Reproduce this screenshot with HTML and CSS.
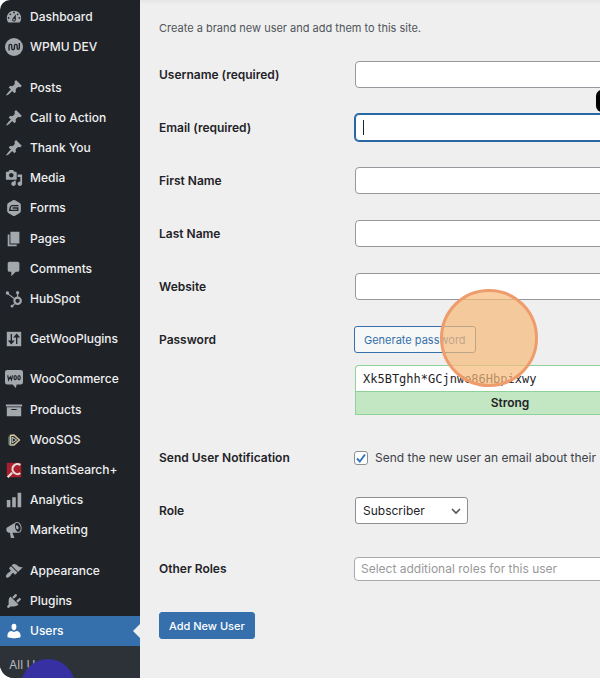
FILE: index.html
```html
<!DOCTYPE html>
<html lang="en">
<head>
<meta charset="utf-8">
<title>Add New User</title>
<link rel="stylesheet" href="styles.css">
</head>
<body>
<div class="shell">
  <nav class="sidebar" aria-label="Main menu">
    <ul class="menu">
      <li><a href="#"><svg viewBox="0 0 20 20"><path d="M3.76 16h12.48c1.1-1.37 1.76-3.11 1.76-5 0-4.42-3.58-8-8-8s-8 3.58-8 8c0 1.89.66 3.63 1.76 5zM10 4c.55 0 1 .45 1 1s-.45 1-1 1-1-.45-1-1 .45-1 1-1zM6 6c.55 0 1 .45 1 1s-.45 1-1 1-1-.45-1-1 .45-1 1-1zm8 0c.55 0 1 .45 1 1s-.45 1-1 1-1-.45-1-1 .45-1 1-1zm-5.37 5.55L12 7v6c0 1.1-.9 2-2 2s-2-.9-2-2c0-.57.24-1.08.63-1.45zM4 10c.55 0 1 .45 1 1s-.45 1-1 1-1-.45-1-1 .45-1 1-1zm12 0c.55 0 1 .45 1 1s-.45 1-1 1-1-.45-1-1 .45-1 1-1zm-5 3c0-.55-.45-1-1-1s-1 .45-1 1 .45 1 1 1 1-.45 1-1z"/></svg>Dashboard</a></li>
      <li><a href="#"><svg viewBox="0 0 20 20"><circle cx="10" cy="10" r="10"/><path class="cut-line" d="M4.5 14V8.5a1.5 1.5 0 0 1 3 0v3a1.5 1.5 0 0 0 3 0v-3a1.5 1.5 0 0 1 3 0v3a1.2 1.2 0 0 0 2.4 0V5.5"/></svg>WPMU DEV</a></li>
      <li class="separator"></li>
      <li><a href="#"><svg viewBox="0 0 20 20"><path id="pin" d="M10.44 3.02l1.82-1.82 6.36 6.35-1.83 1.82c-1.05-.68-2.48-.57-3.41.36l-.75.75c-.92.93-1.04 2.35-.35 3.41l-1.83 1.82-2.41-2.41-2.8 2.79c-.42.42-3.38 2.71-3.8 2.29s1.86-3.39 2.28-3.81l2.79-2.79L4.1 9.36l1.83-1.82c1.05.69 2.48.57 3.4-.36l.75-.75c.93-.92 1.05-2.35.36-3.41z"/></svg>Posts</a></li>
      <li><a href="#"><svg viewBox="0 0 20 20"><use href="#pin"/></svg>Call to Action</a></li>
      <li><a href="#"><svg viewBox="0 0 20 20"><use href="#pin"/></svg>Thank You</a></li>
      <li><a href="#"><svg viewBox="0 0 20 20"><path d="M13 11V4c0-.55-.45-1-1-1h-1.67L9 1H5L3.67 3H2c-.55 0-1 .45-1 1v7c0 .55.45 1 1 1h10c.55 0 1-.45 1-1zM7 4.5c1.38 0 2.5 1.12 2.5 2.5S8.38 9.5 7 9.5 4.5 8.38 4.5 7 5.62 4.5 7 4.5zM14 6h5v10.5c0 1.38-1.12 2.5-2.5 2.5S14 17.88 14 16.5s1.12-2.5 2.5-2.5c.17 0 .34.02.5.05V9h-3V6zm-4 8.05V13h2v3.5c0 1.38-1.12 2.5-2.5 2.5S7 17.88 7 16.5 8.12 14 9.5 14c.17 0 .34.02.5.05z"/></svg>Media</a></li>
      <li><a href="#"><svg viewBox="0 0 20 20"><path d="M8.8 1.5q1.2-.7 2.4 0l5.2 3q1.2.7 1.2 2.1v6.8q0 1.4-1.2 2.1l-5.2 3q-1.2.7-2.4 0l-5.2-3q-1.2-.7-1.2-2.1V6.600q0-1.400 1.200-2.100z"/><path class="cut-line" d="M15 7.300H8.200Q6.600 7.300 6 9l-.8 3.700h9V10H8.500"/></svg>Forms</a></li>
      <li><a href="#"><svg viewBox="0 0 20 20"><path d="M6 15V2h10v13H6zm-1 1h8v2H3V5h2v11z"/></svg>Pages</a></li>
      <li><a href="#"><svg viewBox="0 0 20 20"><path d="M5 2h9c1.100 0 2 .9 2 2v7c0 1.100-.9 2-2 2h-2l-5 5v-5H5c-1.100 0-2-.9-2-2V4c0-1.100.9-2 2-2z"/></svg>Comments</a></li>
      <li><a href="#"><svg viewBox="0 0 20 20"><circle class="line" cx="14" cy="12" r="3.600"/><path class="line thin" d="M14 8V4M11 10 3 4M11.500 14.500 8 18"/><circle cx="14" cy="3" r="1.800"/><circle cx="2.700" cy="3.400" r="1.900"/><circle cx="7.800" cy="18" r="1.500"/></svg>HubSpot</a></li>
      <li class="separator"></li>
      <li><a href="#"><svg viewBox="0 0 20 20"><path d="M2 2h16v16H2z"/><path class="cut-line" d="M7 4.500v9M4.800 12.500h4.400L7 15zM13 15.500v-9M10.800 7.500h4.400L13 5z"/></svg>GetWooPlugins</a></li>
      <li class="separator"></li>
      <li><a href="#"><svg viewBox="0 0 20 20"><path d="M2.500 0h15A2.500 2.500 0 0 1 20 2.500v11a2.500 2.500 0 0 1-2.500 2.500H13l-1 4-3.500-4h-6A2.500 2.500 0 0 1 0 13.500v-11A2.500 2.500 0 0 1 2.500 0z"/><path class="cut-line thin" d="M3 6l1 5 1.800-3.500 1.500 3.500 1-5"/><ellipse class="cut-line thin" cx="11.300" cy="8.500" rx="1.300" ry="2.200"/><ellipse class="cut-line thin" cx="15.600" cy="8.500" rx="1.300" ry="2.200"/></svg>WooCommerce</a></li>
      <li><a href="#"><svg viewBox="0 0 20 20"><path d="M19 4v2H1V4h18zM2 7h16v10H2V7zm11 3V9H7v1h6z"/></svg>Products</a></li>
      <li><a href="#"><svg viewBox="0 0 20 20"><path class="sos-ring" d="M6 15.500V5l4-.5 6 5.500-6 5.500z"/><path class="sos-edge" d="M4.500 6v8.500l4 1.500"/><path class="sos-core" d="m8 7 5 3-5 3z"/></svg>WooSOS</a></li>
      <li><a href="#"><svg viewBox="0 0 20 20"><path class="search-tile" d="M2 2h16v16H2z"/><path class="search-glass" d="M17 4.500a5.500 5.500 0 1 0 0 9M8 13l-5 5"/></svg>InstantSearch+</a></li>
      <li><a href="#"><svg viewBox="0 0 20 20"><path d="M18 18V2h-4v16h4zm-6 0V7H8v11h4zm-6 0v-8H2v8h4z"/></svg>Analytics</a></li>
      <li><a href="#"><svg viewBox="0 0 20 20"><path d="M18.150 5.940c.46 1.620.38 3.220-.02 4.480-.42 1.280-1.260 2.180-2.300 2.480-.16.06-.26.06-.4.06-.06.02-.12.02-.18.02-.06.02-.14.02-.22.02h-6.800l2.220 5.500c.02.14-.06.26-.14.34-.08.1-.24.16-.34.16H6.950c-.1 0-.26-.06-.34-.16-.08-.08-.16-.2-.14-.34l-1-5.500H4.250l-.02-.02c-.5.06-1.080-.18-1.540-.62s-.88-1.080-1.060-1.880c-.24-.8-.2-1.560-.02-2.200.18-.62.58-1.080 1.060-1.300l.02-.02 9-5.400c.1-.06.18-.1.24-.16.06-.04.14-.08.24-.12.16-.08.28-.12.5-.18 1.040-.3 2.240.1 3.220.98s1.840 2.240 2.260 3.860zm-2.580 5.980h-.02c.4-.1.74-.34 1.040-.7.58-.7.86-1.760.86-3.040 0-.64-.1-1.300-.28-1.980-.34-1.360-1.020-2.500-1.780-3.240s-1.680-1.100-2.460-.88c-.82.22-1.400.96-1.700 2-.32 1.040-.28 2.360.06 3.720.38 1.360 1 2.500 1.800 3.240.78.74 1.620 1.100 2.480.88zm-2.540-7.080c.22-.04.42-.02.62.04.38.16.76.48 1.020 1s.42 1.200.42 1.780c0 .3-.04.56-.12.8-.18.48-.44.84-.86.94-.34.1-.8-.06-1.140-.4s-.64-.86-.78-1.500c-.18-.62-.12-1.240.02-1.720s.48-.84.82-.94z"/></svg>Marketing</a></li>
      <li class="separator"></li>
      <li><a href="#"><svg viewBox="0 0 20 20"><path d="M14.480 11.060L7.410 3.990l1.500-1.500c.5-.56 2.300-.47 3.510.32 1.210.8 1.430 1.280 2.910 2.100 1.180.64 2.450 1.260 4.450.85zm-.71.71L6.700 4.700 4.930 6.470c-.39.39-.39 1.020 0 1.410l1.060 1.060c.39.39.39 1.030 0 1.420-.6.6-1.430 1.110-2.210 1.690-.35.26-.7.53-1.010.84C1.430 14.230.4 16.080 1.400 17.070c.99 1 2.840-.03 4.180-1.360.31-.31.58-.66.85-1.020.57-.78 1.080-1.610 1.690-2.210.39-.39 1.020-.39 1.410 0l1.060 1.060c.39.39 1.020.39 1.410 0z"/></svg>Appearance</a></li>
      <li><a href="#"><svg viewBox="0 0 20 20"><path d="M13.110 4.360L9.870 7.600 8 5.730l3.240-3.240c.35-.34 1.050-.2 1.560.32.52.51.66 1.210.31 1.550zm-8 1.770l.91-1.120 9.010 9.010-1.190.84c-.71.71-2.630 1.160-3.820 1.160H6.140L4.900 17.260c-.59.59-1.540.59-2.120 0-.59-.58-.59-1.530 0-2.120l1.240-1.240v-3.880c0-1.130.4-3.190 1.090-3.890zm7.260 3.970l3.240-3.240c.34-.35 1.040-.21 1.550.31.52.51.66 1.210.31 1.550l-3.240 3.250z"/></svg>Plugins</a></li>
      <li class="current"><a href="#" aria-current="page"><svg viewBox="0 0 20 20"><path d="M10 9.250c-2.270 0-2.730-3.440-2.730-3.440C7 4.020 7.820 2 9.970 2c2.160 0 2.980 2.020 2.710 3.810 0 0-.41 3.440-2.680 3.440zm0 1.750L12.720 10c2.390 0 4.520 2.330 4.520 4.530v2.490s-3.650 1.130-7.240 1.130c-3.650 0-7.240-1.130-7.240-1.130v-2.490c0-2.250 1.940-4.480 4.470-4.480z"/></svg>Users</a></li>
    </ul>
    <div class="submenu"><a href="#">All Users</a><span class="bubble"></span></div>
  </nav>

  <main class="content">
    <p class="intro">Create a brand new user and add them to this site.</p>
    <form class="user-form">
      <div class="row"><label for="username">Username (required)</label><input class="text" id="username" type="text"></div>
      <div class="row"><label for="email">Email (required)</label><div class="field"><input class="text active" id="email" type="text"><span class="caret"></span><span class="tooltip"></span></div></div>
      <div class="row"><label for="first">First Name</label><input class="text" id="first" type="text"></div>
      <div class="row"><label for="last">Last Name</label><input class="text" id="last" type="text"></div>
      <div class="row"><label for="website">Website</label><input class="text" id="website" type="text"></div>
      <div class="row"><label for="password">Password</label><div class="field"><button class="button" type="button">Generate password</button><span class="pointer"></span></div></div>
      <div class="row password-row"><div class="password"><input id="password" type="text" value="Xk5BTghh*GCjnwe86Hbpixwy"><div class="strength">Strong</div></div></div>
      <div class="row notify-row"><span class="heading">Send User Notification</span><label class="check" for="notify"><span class="box"><input id="notify" type="checkbox" checked><svg viewBox="0 0 14 14"><path d="M3 7.500 5.800 10.500 11 3.500"/></svg></span>Send the new user an email about their</label></div>
      <div class="row role-row"><label for="role">Role</label><div class="select"><select id="role"><option>Subscriber</option></select><svg viewBox="0 0 12 12"><path d="m2 4 4 4 4-4"/></svg></div></div>
      <div class="row other-row"><label for="other">Other Roles</label><input class="chooser" id="other" type="text" placeholder="Select additional roles for this user"></div>
      <button class="button primary" type="submit">Add New User</button>
    </form>
  </main>
</div>
</body>
</html>
```
FILE: styles.css
```css
* { box-sizing: border-box; }

body {
  margin: 0;
  background: #fff;
  color: #1f2328;
  font: 12px/18px Inter, "Liberation Sans", sans-serif;
}

a { color: inherit; text-decoration: none; }
input, select, button { font: inherit; color: inherit; margin: 0; }

.shell {
  display: flex;
  height: calc(100vh - 14px);
  min-height: 678px;
  overflow: hidden;
  border-radius: 10px 0 0 14px;
  background: #efefef;
}

/* Sidebar */
.sidebar {
  flex: 0 0 140px;
  display: flex;
  flex-direction: column;
  padding-top: 2px;
  background: #1f2328;
  color: #f0f0f1;
}

.menu {
  flex: 1;
  display: flex;
  flex-direction: column;
  margin: 0;
  padding: 0;
  list-style: none;
  font-weight: 500;
}
.menu li { flex: 1; display: flex; }
.menu .separator { flex: 0 0 10px; }
.menu a {
  flex: 1;
  display: flex;
  align-items: center;
  gap: 7px;
  padding-left: 5px;
  white-space: nowrap;
}
.menu svg { flex: none; width: 18px; height: 18px; fill: #a3a8ad; }
.menu .cut-line { fill: none; stroke: #1f2328; stroke-width: 1.5; }
.menu .line { fill: none; stroke: #a3a8ad; stroke-width: 2.4; }
.menu .thin { stroke-width: 1.3; }
.menu .sos-ring { fill: #343b3b; stroke: #d6c49a; stroke-width: 1.6; }
.menu .sos-edge { fill: none; stroke: #79aaa0; stroke-width: 1.2; }
.menu .sos-core { fill: #1f2328; stroke: #ddd; stroke-width: 1; }
.menu .search-tile { fill: #a91f2c; }
.menu .search-glass { fill: none; stroke: #e8dcdc; stroke-width: 2.4; }

.current { position: relative; background: #3570ac; color: #fff; }
.menu .current svg { fill: #fff; }
.current::after {
  content: "";
  position: absolute;
  right: 0;
  top: 50%;
  margin-top: -7px;
  border: 7px solid transparent;
  border-left-width: 0;
  border-right-color: #efefef;
}

.submenu {
  position: relative;
  flex: 0 0 32px;
  padding: 10px 9px 0;
  background: #2d3238;
  color: #b4b8bc;
}
.bubble {
  position: absolute;
  left: 21px;
  top: 13px;
  width: 54px;
  height: 54px;
  border-radius: 50%;
  background: #3730a3;
}

/* Form */
.content {
  flex: 1;
  min-width: 0;
  padding: 19px 0 0 19px;
  background: linear-gradient(#e6e6e6, #efefef 5px);
}
.intro { margin: 0 0 24px; color: #50555a; font-size: 11px; }

.user-form { display: flex; flex-direction: column; align-items: flex-start; gap: 26px; }
.row {
  display: grid;
  grid-template-columns: 195px 311px;
  align-items: center;
  min-height: 27px;
  white-space: nowrap;
}
.row > label:first-child, .heading { font-weight: 600; }
.field { position: relative; display: flex; }

.text {
  width: 310px;
  height: 27px;
  margin-left: 1px;
  padding: 0 8px;
  border: 1px solid #95989c;
  border-radius: 4px;
  background: #fff;
}
.text.active { border-color: #2a68a5; box-shadow: 0 0 0 1px #2a68a5; }
.caret { position: absolute; left: 9px; top: 6px; width: 1px; height: 15px; background: #1f2328; }
.tooltip { position: absolute; left: 242px; top: -24px; width: 60px; height: 22px; border-radius: 6px; background: #000; }

.button {
  height: 27px;
  padding: 0 9px;
  border: 1px solid #3570ac;
  border-radius: 3px;
  background: #f6f7f7;
  color: #3570ac;
  font-size: 11px;
}
.button.primary { background: #3570ac; color: #fff; font-weight: 500; }
.pointer {
  position: absolute;
  left: 86px;
  top: -37px;
  width: 98px;
  height: 98px;
  border: 3px solid #ee9c6c;
  border-radius: 50%;
  background: rgba(247, 187, 122, 0.7);
}

.password-row { margin-top: -14px; }
.password { grid-column: 2; margin-left: 1px; }
.password input {
  display: block;
  width: 100%;
  height: 26px;
  padding: 0 7px;
  border: 1px solid #8ed29a;
  border-bottom: 0;
  border-radius: 4px 4px 0 0;
  background: #fff;
  font-family: "DejaVu Sans Mono", monospace;
}
.strength {
  height: 24px;
  border: 1px solid #8ed29a;
  background: #c3e6c3;
  font-weight: 600;
  line-height: 22px;
  text-align: center;
}

.notify-row { margin-top: 3px; }
.check { display: flex; align-items: center; gap: 7px; color: #3c4248; }
.box { position: relative; display: flex; }
.box input {
  appearance: none;
  width: 14px;
  height: 14px;
  border: 1px solid #8c8f94;
  border-radius: 3px;
  background: #fff;
}
.box svg {
  position: absolute;
  inset: 0;
  fill: none;
  stroke: #3577b8;
  stroke-width: 2;
  pointer-events: none;
}

.select { position: relative; width: 113px; margin-left: 1px; }
.select select {
  appearance: none;
  display: block;
  width: 100%;
  height: 27px;
  padding: 0 7px;
  border: 1px solid #8c8f94;
  border-radius: 3px;
  background: #fff;
}
.select svg {
  position: absolute;
  right: 6px;
  top: 8px;
  width: 12px;
  height: 12px;
  fill: none;
  stroke: #50555a;
  stroke-width: 1.6;
  pointer-events: none;
}

.other-row { margin-top: 5px; }
.chooser {
  width: 311px;
  height: 24px;
  padding: 0 6px;
  border: 1px solid #aaa;
  border-radius: 4px;
  background: #fff;
}
.chooser::placeholder { color: #999; opacity: 1; }
.user-form > .primary { margin-top: 4px; }
```
